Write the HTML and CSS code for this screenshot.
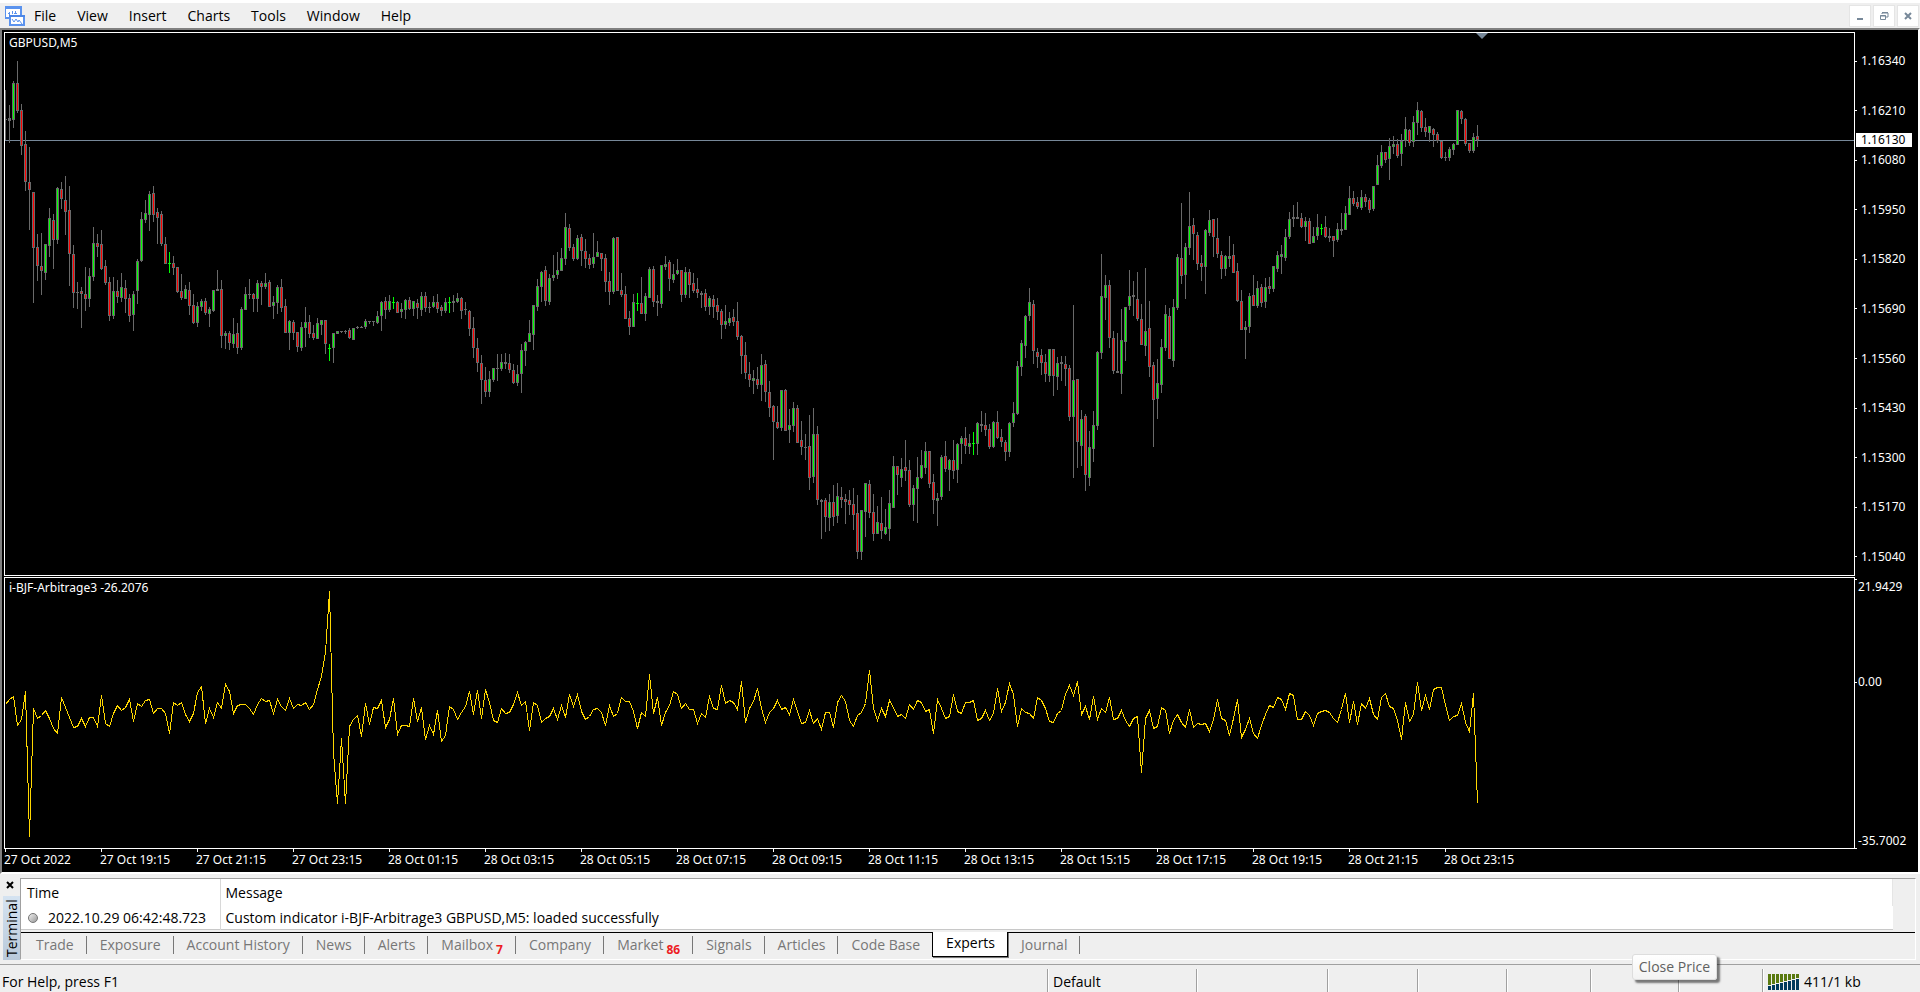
FILE: index.html
```html
<!DOCTYPE html>
<html lang="en">
<head>
  <meta charset="UTF-8" />
  <meta name="viewport" content="width=device-width, initial-scale=1.0"/>
  <title>GBPUSD,M5</title>
  <link rel="stylesheet" href="styles.css">
</head>
<body>
  <header class="menubar">
    <svg class="app-icon" width="20" height="20" viewBox="0 0 20 20" shape-rendering="crispEdges">
      <rect x="0" y="1" width="16" height="11" rx="1" fill="#fff" stroke="#5b93ee" stroke-width="2"/>
      <path d="M0 1h17v2H0z" fill="#5b93ee"/>
      <path d="M4 6v3M7 5v3M10 5v3M3 7h2M9 7h3" stroke="#5b93ee" fill="none"/>
      <rect x="5" y="10" width="14" height="9" fill="#fff" stroke="#5b93ee" stroke-width="2"/>
      <path d="M4 9h16v2H4z" fill="#4c86e6"/>
      <path d="M7 13l2 3 2-3 2 3 1-2 3 4" stroke="#5b93ee" fill="none" shape-rendering="auto"/>
    </svg>
    <nav class="menu">
      <button type="button">File</button>
      <button type="button">View</button>
      <button type="button">Insert</button>
      <button type="button">Charts</button>
      <button type="button">Tools</button>
      <button type="button">Window</button>
      <button type="button">Help</button>
    </nav>
    <div class="window-buttons">
      <button type="button" aria-label="Minimize">
        <svg width="10" height="10"><path d="M2 7h6v2H2z" fill="#778899"/></svg>
      </button>
      <button type="button" aria-label="Restore">
        <svg width="10" height="10" fill="none" stroke="#778899"><path d="M3 3V2h6v4H7M3 1.500h6"/><path d="M1.500 4.500h5v4h-5zM1 5h6"/></svg>
      </button>
      <button type="button" aria-label="Close">
        <svg width="10" height="10"><path d="M2 2l6 6M8 2l-6 6" stroke="#778899" stroke-width="2"/></svg>
      </button>
    </div>
  </header>

  <main class="chart">
    <section class="pane pane-price">
      <div class="plot">
        <h1 class="plot-title">GBPUSD,M5</h1>
        <svg id="price"></svg>
      </div>
      <ul class="scale">
        <li>1.16340</li>
        <li>1.16210</li>
        <li>1.16080</li>
        <li>1.15950</li>
        <li>1.15820</li>
        <li>1.15690</li>
        <li>1.15560</li>
        <li>1.15430</li>
        <li>1.15300</li>
        <li>1.15170</li>
        <li>1.15040</li>
      </ul>
      <span class="bid">1.16130</span>
    </section>
    <section class="pane pane-indicator">
      <div class="plot">
        <h2 class="plot-title">i-BJF-Arbitrage3 -26.2076</h2>
        <svg id="indicator"></svg>
      </div>
      <ul class="scale scale-indicator">
        <li>21.9429</li>
        <li>0.00</li>
        <li>-35.7002</li>
      </ul>
    </section>
    <ul class="times">
      <li>27 Oct 2022</li>
      <li>27 Oct 19:15</li>
      <li>27 Oct 21:15</li>
      <li>27 Oct 23:15</li>
      <li>28 Oct 01:15</li>
      <li>28 Oct 03:15</li>
      <li>28 Oct 05:15</li>
      <li>28 Oct 07:15</li>
      <li>28 Oct 09:15</li>
      <li>28 Oct 11:15</li>
      <li>28 Oct 13:15</li>
      <li>28 Oct 15:15</li>
      <li>28 Oct 17:15</li>
      <li>28 Oct 19:15</li>
      <li>28 Oct 21:15</li>
      <li>28 Oct 23:15</li>
    </ul>
  </main>

  <section class="terminal">
    <div class="terminal-side">
      <button type="button" class="terminal-close" aria-label="Close terminal">
        <svg width="8" height="8"><path d="M1 1l6 6M7 1L1 7" stroke="#000" stroke-width="2"/></svg>
      </button>
      <span class="terminal-name">Terminal</span>
    </div>
    <div class="terminal-body">
      <div class="log-wrap">
        <table class="log">
          <thead>
            <tr><th class="log-time">Time</th><th>Message</th></tr>
          </thead>
          <tbody>
            <tr>
              <td class="log-time"><span class="dot"></span>2022.10.29 06:42:48.723</td>
              <td>Custom indicator i-BJF-Arbitrage3 GBPUSD,M5: loaded successfully</td>
            </tr>
          </tbody>
        </table>
      </div>
      <nav class="tabs">
        <button type="button">Trade</button>
        <button type="button">Exposure</button>
        <button type="button">Account History</button>
        <button type="button">News</button>
        <button type="button">Alerts</button>
        <button type="button">Mailbox<b>7</b></button>
        <button type="button">Company</button>
        <button type="button">Market<b>86</b></button>
        <button type="button">Signals</button>
        <button type="button">Articles</button>
        <button type="button">Code Base</button>
        <button type="button" class="active">Experts</button>
        <button type="button">Journal</button>
      </nav>
    </div>
  </section>

  <footer class="statusbar">
    <span>For Help, press F1</span>
    <span>Default</span>
    <span></span>
    <span></span>
    <span></span>
    <span></span>
    <span></span>
    <span></span>
    <span class="traffic"><svg id="signal" width="32" height="16"></svg>411/1 kb</span>
  </footer>
  <div class="tooltip" role="tooltip">Close Price</div>

  <script src="chart.js"></script>
</body>
</html>
```
FILE: styles.css
```css
* {
  box-sizing: border-box;
}
body {
  margin: 0;
  height: 100vh;
  display: flex;
  flex-direction: column;
  position: relative;
  overflow: hidden;
  background: #efefef;
  color: #000;
  font-family: "Open Sans", "Noto Sans", sans-serif;
  font-size: 14px;
  line-height: 20px;
}
button {
  margin: 0;
  padding: 0;
  border: none;
  background: none;
  color: inherit;
  font: inherit;
}
ul {
  margin: 0;
  padding: 0;
  list-style: none;
}
svg {
  display: block;
}

/* menu */
.menubar {
  flex: none;
  height: 28px;
  border-top: 3px solid #fff;
  padding: 0 1px 0 5px;
  display: flex;
  align-items: center;
}
.menu {
  display: flex;
  gap: 21px;
  margin-left: 9px;
  flex: 1;
}
.window-buttons {
  display: flex;
  gap: 2px;
}
.window-buttons button {
  width: 22px;
  height: 22px;
  border: 1px solid #e5e5e5;
  background: #fff;
  display: flex;
  align-items: center;
  justify-content: center;
}

/* chart */
.chart {
  flex: 1;
  min-height: 0;
  display: flex;
  flex-direction: column;
  padding: 2px 0 0 2px;
  background: #000;
  color: #fff;
  border-top: 2px solid #808080;
  border-left: 2px solid #808080;
  border-right: 2px solid #fff;
  border-bottom: 2px solid #fff;
  font-family: "Noto Sans", "Open Sans", sans-serif;
  font-size: 12px;
  line-height: 16px;
}
.pane {
  display: flex;
  position: relative;
  min-height: 0;
}
.pane-price {
  flex: 2 1 0;
  margin-bottom: 1px;
}
.pane-indicator {
  flex: 1 1 0;
}
.plot {
  flex: 1;
  min-width: 0;
  border: 1px solid #fff;
  position: relative;
}
.plot svg {
  width: 100%;
  height: 100%;
}
.plot-title {
  position: absolute;
  top: 2px;
  left: 4px;
  margin: 0;
  font-size: 12px;
  font-weight: normal;
}
.scale {
  width: 63px;
  display: flex;
  flex-direction: column;
  justify-content: space-between;
  padding: 21px 0 11px;
}
.scale li {
  display: flex;
  align-items: center;
  gap: 4px;
}
.scale li::before {
  content: "";
  width: 2px;
  height: 1px;
  background: #fff;
}
.scale-indicator {
  display: grid;
  grid-template-rows: 95fr 159fr 16px;
  align-items: start;
  padding: 2px 0 0;
}
.scale-indicator li {
  gap: 1px;
}
.scale-indicator li:first-child::before {
  align-self: flex-start;
}
.scale-indicator li:last-child::before {
  align-self: flex-end;
}
.bid {
  position: absolute;
  top: 101px;
  right: 6px;
  width: 56px;
  padding-left: 5px;
  background: #fff;
  color: #000;
  line-height: 14px;
}
.times {
  flex: none;
  height: 23px;
  display: flex;
}
.times li {
  flex: none;
  width: 96px;
}
.times li::before {
  content: "";
  display: block;
  width: 1px;
  height: 3px;
  margin-left: 1px;
  background: #fff;
}

/* terminal */
.terminal {
  flex: none;
  height: 90px;
  display: flex;
  padding: 4px 4px 4px 3px;
}
.terminal-side {
  width: 17px;
  display: flex;
  flex-direction: column;
}
.terminal-close {
  height: 18px;
  padding: 0 3px 4px;
}
.terminal-name {
  flex: 1;
  writing-mode: vertical-rl;
  transform: rotate(180deg);
  line-height: 17px;
  padding-top: 3px;
  background: linear-gradient(#b9c9da, #d5e3f1);
  font-size: 14px;
}
.terminal-body {
  flex: 1;
  border: 1px solid #a0a0a0;
  border-right-color: #fff;
  border-bottom-color: #fff;
  display: flex;
  flex-direction: column;
}
.log-wrap {
  height: 53px;
  padding-right: 22px;
}
.log {
  width: 100%;
  border-collapse: collapse;
  background: #fff;
  border-bottom: 1px solid #c8c8c8;
}
.log th,
.log td {
  padding: 0 5px;
  text-align: left;
  font-weight: normal;
}
.log th {
  height: 27px;
  border-right: 1px solid #e5e5e5;
}
.log td {
  height: 23px;
  padding-top: 1px;
}
.log .log-time {
  width: 199px;
  padding-left: 6px;
  border-right: 1px solid #d8d8d8;
}
.dot {
  display: inline-block;
  width: 10px;
  height: 10px;
  margin: 0 10px 0 1px;
  border: 1px solid #777;
  border-radius: 50%;
  background: linear-gradient(135deg, #eee, #999);
}
.tabs {
  flex: 1;
  display: flex;
  align-items: flex-start;
  padding-left: 2px;
  border-top: 1px solid #000;
  color: #777;
}
.tabs button {
  height: 18px;
  margin-top: 3px;
  padding: 0 12px 0 13px;
  border-right: 1px solid #777;
  line-height: 18px;
}
.tabs button:nth-child(11) {
  border-right-color: transparent;
}
.tabs .active {
  height: 25px;
  margin: -1px 0 0 -1px;
  padding-bottom: 3px;
  border: 1px solid #000;
  border-top: none;
  background: #fff;
  color: #000;
  box-shadow: 1px 1px 0 #777;
}
.tabs b {
  margin-left: 3px;
  color: #ed1c24;
  font-size: 12px;
  vertical-align: -4px;
  line-height: 12px;
}

/* status */
.statusbar {
  flex: none;
  height: 28px;
  border-top: 1px solid #a0a0a0;
  padding: 4px 0 0 2px;
  display: grid;
  grid-template-columns: 1fr 149px 131px 90px 89px 84px 88px 84px 158px;
}
.statusbar span {
  padding: 3px 0 0 5px;
  border-left: 1px solid #a0a0a0;
  box-shadow: inset 1px 0 0 #fff;
}
.statusbar span:first-child {
  padding-left: 0;
  border: none;
  box-shadow: none;
}
.statusbar .traffic {
  display: flex;
  align-items: center;
  gap: 4px;
}
.tooltip {
  position: absolute;
  right: 203px;
  bottom: 12px;
  padding: 2px 6px;
  border: 1px solid #ddd;
  border-radius: 3px;
  background: linear-gradient(#fff, #f3f3f3);
  box-shadow: 3px 3px 2px rgba(0, 0, 0, 0.5);
  color: #606060;
}
```
FILE: chart.js
```js
const NS = "http://www.w3.org/2000/svg";
const BAR = 4;
const PRICE_TOP = 33;
const INDICATOR_TOP = 578;
const BID_Y = 140;

// high, body top, body bottom, low, type (g = up, r = down, d = flat, x = no change)
const bars = `
90,119,120,140,d 105,118,121,143,d 81,83,120,128,g 61,83,111,113,r 104,110,146,155,r 131,144,182,191,r 147,182,190,230,r 192,192,248,303,r
234,247,266,281,r 233,266,271,295,r 244,244,273,280,g 208,218,246,257,g 214,220,240,269,r 187,188,240,244,g 182,189,199,209,r 176,200,212,235,r
186,210,254,286,r 245,254,293,308,r 282,292,293,309,d 287,291,294,328,r 267,294,299,311,r 268,276,299,307,g 227,243,277,281,g 234,243,247,257,r
230,244,269,270,r 260,266,283,285,r 277,282,316,321,r 277,291,316,319,g 280,291,297,303,r 273,287,298,302,g 280,288,299,313,r 294,298,316,322,r
291,294,315,331,g 259,261,291,304,g 212,219,261,262,g 200,213,220,223,g 191,194,215,231,g 186,193,215,222,r 208,212,218,244,r 211,214,244,246,r
237,244,264,264,r 252,263,263,273,x 256,263,268,275,r 267,267,292,293,r 274,291,298,300,r 285,289,299,299,g 282,290,306,315,r 294,305,323,324,r
302,306,323,327,g 299,301,307,311,g 298,301,313,315,r 307,309,314,327,g 290,290,311,312,g 270,289,291,291,d 280,289,336,348,r 331,333,336,349,g
331,333,343,350,r 318,334,344,348,g 323,333,348,354,r 307,309,348,350,g 287,294,310,310,g 279,294,295,299,d 293,294,299,312,r 280,283,299,312,g
281,283,287,305,r 273,283,287,289,g 280,282,307,307,r 296,302,306,319,g 285,287,303,314,g 279,287,308,312,r 299,306,333,333,r 320,321,333,350,g
320,322,333,340,r 332,332,347,352,r 322,327,348,351,g 307,322,328,347,g 315,322,334,338,r 325,333,338,340,r 318,323,339,339,g 320,320,325,335,g
320,320,344,354,r 344,348,348,361,x 333,333,348,363,g 331,331,334,334,g 331,331,332,333,d 330,331,332,334,d 328,330,338,339,r 328,328,340,340,g
326,327,328,329,d 326,327,328,328,d 319,321,327,329,g 321,321,322,324,d 321,321,322,326,d 311,316,323,324,g 301,302,316,331,g 297,301,310,319,r
295,301,310,312,g 297,302,302,309,x 301,302,313,313,r 303,309,312,318,g 299,300,310,319,g 297,300,309,310,r 301,301,309,316,g 299,303,308,319,r
292,296,310,316,g 292,296,308,312,r 302,307,308,313,d 296,302,307,308,g 294,302,309,313,r 305,307,311,316,r 298,302,311,313,g 297,302,302,313,x
295,301,303,312,d 293,298,302,303,g 297,298,311,319,r 302,309,310,315,d 310,311,329,336,r 317,328,348,358,r 338,348,363,372,r 355,363,380,404,r
367,380,392,397,r 371,379,392,397,g 368,368,380,382,g 354,368,369,381,d 354,362,369,371,g 353,362,364,369,d 354,363,370,373,r 364,370,383,384,r
365,374,383,386,g 344,350,374,393,g 341,342,351,366,g 320,333,342,342,g 305,305,335,350,g 279,286,307,311,g 271,272,287,302,g 266,270,301,306,r
274,278,302,305,g 255,275,278,281,g 252,270,275,279,g 248,258,271,271,g 213,227,259,265,g 224,228,248,251,r 244,247,259,261,r 235,238,259,260,g
234,237,251,266,r 239,251,259,268,r 254,258,265,269,r 233,257,264,268,g 241,252,257,257,g 253,253,259,271,r 254,258,282,292,r 272,281,292,305,r
237,238,292,294,g 237,237,291,291,r 273,290,295,297,r 286,294,319,319,r 311,318,327,335,r 294,302,327,327,g 293,303,303,311,x 277,303,314,314,r
293,296,314,321,g 267,269,298,298,g 266,269,302,307,r 295,301,303,316,d 265,265,304,308,g 256,264,267,270,g 260,262,279,291,r 264,274,280,283,g
259,270,274,275,g 270,270,295,302,r 267,272,295,298,g 269,272,285,298,r 273,283,291,293,r 278,289,293,298,r 291,293,295,308,d 289,293,307,311,r
296,298,307,315,g 295,299,307,318,r 298,305,312,320,r 309,311,325,339,r 305,321,325,329,g 312,318,323,326,g 309,317,322,326,r 302,321,337,340,r
335,336,356,374,r 342,355,373,379,r 362,374,380,387,r 370,378,381,394,g 367,379,385,389,r 354,365,385,401,g 360,364,392,402,r 381,392,408,417,r
405,406,422,460,r 406,422,428,429,r 390,390,428,431,g 389,390,431,431,r 409,425,430,443,g 402,408,426,432,g 405,408,443,443,r 421,440,447,455,r
434,447,448,460,d 415,446,478,490,r 408,434,477,483,g 426,434,500,505,r 499,500,502,539,d 498,500,517,532,r 494,502,518,531,g 485,502,517,526,r
483,496,516,523,g 487,497,500,508,r 494,499,502,524,r 490,500,505,515,r 488,504,515,530,r 495,513,552,559,r 510,510,552,560,g 483,483,512,537,g
480,484,513,518,r 494,512,534,541,r 506,522,534,534,g 497,523,531,539,r 509,527,534,535,g 490,503,529,541,g 456,466,508,508,g 466,466,475,495,r
458,469,478,487,g 440,467,471,481,r 460,470,505,507,r 485,488,505,521,g 457,477,489,523,g 450,465,478,479,g 442,451,468,474,g 451,451,484,488,r
474,482,500,514,r 493,498,501,526,g 455,457,497,500,g 441,456,469,472,r 459,460,470,491,g 440,460,471,479,r 443,444,470,483,g 436,438,444,464,g
427,438,446,454,r 434,443,447,454,g 432,443,443,455,x 422,423,444,455,g 411,424,426,432,d 413,425,430,436,r 424,429,447,449,r 421,422,447,448,g
411,422,438,439,r 429,437,442,447,r 440,442,452,461,r 422,423,452,457,g 402,413,423,427,g 361,366,414,415,g 340,343,367,376,g 315,316,346,358,g
288,302,316,321,g 300,304,351,364,r 348,352,357,368,r 349,355,363,375,r 354,362,374,382,r 349,349,376,382,g 349,349,376,396,r 357,363,377,390,g
356,362,364,381,d 356,364,369,386,r 365,368,417,421,r 305,380,417,478,g 379,379,442,468,r 410,419,446,466,g 414,416,475,491,r 431,447,478,486,g
411,425,449,462,g 351,352,426,430,g 254,296,353,359,g 275,285,298,320,g 280,285,338,348,r 331,338,371,374,r 333,371,373,373,d 309,340,374,394,g
307,307,342,361,g 270,296,306,310,g 281,295,297,316,d 272,299,319,321,r 304,319,345,345,r 268,331,346,356,g 301,328,367,377,r 362,365,400,447,r
359,383,399,419,g 339,347,385,393,g 305,314,348,351,g 308,316,359,359,r 299,307,361,367,g 254,257,308,310,g 203,258,276,284,r 243,247,275,299,g
192,226,248,255,g 218,225,234,260,r 232,235,264,270,r 255,263,267,281,r 229,230,267,294,g 210,220,233,236,g 219,219,237,257,r 218,238,254,258,r
251,255,269,279,r 255,256,269,276,g 236,256,259,267,g 244,255,273,273,r 263,271,301,302,r 290,301,330,330,r 321,327,330,359,g 293,296,327,333,g
275,295,306,306,r 281,288,306,308,g 284,287,303,307,r 278,287,302,308,g 277,286,289,294,r 266,266,289,292,g 251,255,269,272,g 245,254,257,274,g
229,237,258,261,g 212,219,237,239,g 205,217,219,227,d 202,217,219,219,d 213,218,227,228,r 217,221,227,241,g 218,221,244,244,r 227,236,243,243,g
214,227,236,240,g 224,228,228,235,x 216,227,237,238,r 228,236,238,242,d 236,236,241,257,r 223,229,240,242,g 213,229,231,235,d 206,213,230,230,g
186,198,215,215,g 191,198,204,206,r 197,202,207,209,r 190,197,208,210,g 194,197,202,207,r 198,200,210,213,r 186,186,209,211,g 155,165,185,185,g
145,152,166,168,g 152,152,160,163,r 138,146,159,180,g 136,144,147,154,g 139,144,156,158,r 134,141,154,166,g 117,129,141,147,g 129,130,143,146,r
116,122,142,147,g 102,110,123,135,g 110,111,128,132,r 118,127,132,137,r 126,126,133,142,g 128,129,135,147,r 132,134,141,143,r 141,141,158,159,r
152,157,158,161,d 147,149,158,161,g 143,144,150,155,g 110,110,145,145,g 110,111,119,124,r 118,119,144,146,r 143,143,151,153,r 133,137,151,153,g
125,136,140,147,r
`.trim().split(/\s+/).map(b => b.split(","));

const arbitrage = [
  704, 699, 696, 725, 719, 691, 836, 708, 718, 715, 710, 718, 728, 733, 697, 707, 717, 727, 726, 718,
  726, 717, 717, 726, 695, 723, 726, 713, 705, 710, 707, 699, 721, 703, 706, 700, 699, 713, 708, 708,
  713, 733, 702, 705, 702, 714, 721, 713, 692, 686, 723, 708, 717, 702, 708, 684, 691, 713, 705, 704,
  704, 708, 714, 704, 698, 701, 700, 713, 699, 706, 710, 698, 708, 704, 705, 702, 709, 704, 689, 676,
  652, 591, 752, 803, 738, 803, 726, 719, 715, 736, 703, 724, 707, 708, 700, 727, 719, 698, 734, 725,
  725, 726, 698, 721, 707, 739, 725, 734, 710, 741, 735, 706, 709, 719, 712, 706, 691, 714, 690, 718,
  689, 702, 720, 722, 708, 713, 712, 704, 692, 705, 701, 730, 702, 705, 722, 718, 716, 708, 719, 705,
  717, 694, 706, 694, 711, 719, 716, 709, 708, 712, 725, 705, 716, 713, 697, 701, 701, 711, 728, 712,
  716, 674, 713, 697, 725, 712, 705, 691, 694, 708, 703, 709, 709, 723, 713, 717, 696, 708, 709, 685,
  703, 700, 702, 709, 681, 722, 708, 701, 688, 708, 722, 712, 708, 700, 709, 707, 714, 699, 711, 723,
  722, 710, 723, 718, 729, 712, 712, 727, 702, 695, 701, 720, 726, 715, 712, 703, 670, 708, 720, 708,
  716, 700, 707, 716, 714, 718, 704, 709, 700, 702, 711, 709, 733, 699, 708, 718, 716, 694, 711, 713,
  702, 702, 700, 720, 718, 710, 720, 713, 688, 711, 702, 683, 694, 726, 708, 712, 713, 718, 697, 700,
  708, 721, 722, 713, 710, 694, 685, 695, 681, 714, 706, 719, 696, 719, 708, 712, 697, 719, 718, 710,
  720, 726, 718, 716, 772, 718, 710, 728, 726, 707, 710, 733, 720, 714, 722, 727, 709, 727, 723, 724,
  723, 731, 719, 699, 718, 720, 735, 718, 699, 737, 729, 718, 733, 738, 725, 714, 705, 707, 697, 699,
  709, 693, 695, 719, 719, 711, 715, 725, 713, 711, 710, 712, 718, 722, 709, 693, 722, 701, 724, 703,
  708, 698, 714, 719, 697, 693, 706, 708, 720, 739, 702, 721, 714, 682, 710, 695, 709, 689, 687, 687,
  705, 720, 716, 715, 703, 722, 731, 693, 803
];

function add(parent, name, attrs) {
  const el = document.createElementNS(NS, name);
  for (const key in attrs) el.setAttribute(key, attrs[key]);
  parent.appendChild(el);
}

function rect(parent, x, y, width, height, fill) {
  add(parent, "rect", { x, y, width, height, fill });
}

const price = document.getElementById("price");
const bidY = BID_Y - PRICE_TOP;
rect(price, 0, bidY, "100%", 1, "#778899");

bars.forEach((bar, i) => {
  const [high, top, bottom, low] = bar.slice(0, 4).map(v => v - PRICE_TOP);
  const type = bar[4];
  const x = i * BAR;
  if (type === "x") {
    rect(price, x, high, 1, low - high, "#00ff00");
    rect(price, x - 1, top, 3, 1, "#00ff00");
    return;
  }
  rect(price, x, high, 1, low - high, "#696969");
  rect(price, x - 1, top, 3, bottom - top, "#696969");
  if (type !== "d" && bottom - top > 2) {
    rect(price, x, top + 1, 1, bottom - top - 2, type === "g" ? "#00ff00" : "#ff0000");
  }
});

// chart shift marker
const shift = bars.length * BAR + 1;
add(price, "polygon", { points: `${shift - 6},0 ${shift + 6},0 ${shift},6`, fill: "#778899" });

add(document.getElementById("indicator"), "polyline", {
  points: arbitrage.map((y, i) => `${i * BAR + 0.5},${y - INDICATOR_TOP + 0.5}`).join(" "),
  fill: "none",
  stroke: "#ffd700",
  "shape-rendering": "crispEdges"
});

const signal = document.getElementById("signal");
for (let i = 0; i < 8; i++) {
  rect(signal, i * 4, 0, 3, 11 - i, "#5a7a10");
  rect(signal, i * 4, 12 - i, 3, 4 + i, "#003a5c");
}
```
